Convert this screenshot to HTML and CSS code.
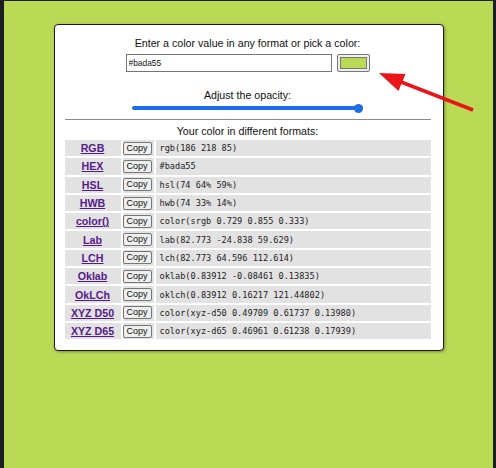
FILE: index.html
```html
<!DOCTYPE html>
<html lang="en">
<head>
<meta charset="utf-8">
<title>Color converter</title>
<link rel="stylesheet" href="styles.css">
</head>
<body>
<main class="card">
  <p class="label-line">Enter a color value in any format or pick a color:</p>
  <div class="input-row">
    <input class="color-text" type="text" value="#bada55">
    <button class="picker" type="button" aria-label="Pick a color"><span class="swatch"></span></button>
  </div>
  <p class="label-line opacity-label">Adjust the opacity:</p>
  <input class="opacity" type="range" min="0" max="100" value="100">
  <hr class="divider">
  <p class="label-line formats-label">Your color in different formats:</p>
  <table class="formats">
    <tbody>
      <tr><td class="name"><a href="#">RGB</a></td><td class="copy"><button type="button">Copy</button></td><td class="value">rgb(186 218 85)</td></tr>
      <tr><td class="name"><a href="#">HEX</a></td><td class="copy"><button type="button">Copy</button></td><td class="value">#bada55</td></tr>
      <tr><td class="name"><a href="#">HSL</a></td><td class="copy"><button type="button">Copy</button></td><td class="value">hsl(74 64% 59%)</td></tr>
      <tr><td class="name"><a href="#">HWB</a></td><td class="copy"><button type="button">Copy</button></td><td class="value">hwb(74 33% 14%)</td></tr>
      <tr><td class="name"><a href="#">color()</a></td><td class="copy"><button type="button">Copy</button></td><td class="value">color(srgb 0.729 0.855 0.333)</td></tr>
      <tr><td class="name"><a href="#">Lab</a></td><td class="copy"><button type="button">Copy</button></td><td class="value">lab(82.773 -24.838 59.629)</td></tr>
      <tr><td class="name"><a href="#">LCH</a></td><td class="copy"><button type="button">Copy</button></td><td class="value">lch(82.773 64.596 112.614)</td></tr>
      <tr><td class="name"><a href="#">Oklab</a></td><td class="copy"><button type="button">Copy</button></td><td class="value">oklab(0.83912 -0.08461 0.13835)</td></tr>
      <tr><td class="name"><a href="#">OkLCh</a></td><td class="copy"><button type="button">Copy</button></td><td class="value">oklch(0.83912 0.16217 121.44802)</td></tr>
      <tr><td class="name"><a href="#">XYZ D50</a></td><td class="copy"><button type="button">Copy</button></td><td class="value">color(xyz-d50 0.49709 0.61737 0.13980)</td></tr>
      <tr><td class="name"><a href="#">XYZ D65</a></td><td class="copy"><button type="button">Copy</button></td><td class="value">color(xyz-d65 0.46961 0.61238 0.17939)</td></tr>
    </tbody>
  </table>
</main>
<svg class="annotation" width="496" height="468" viewBox="0 0 496 468" aria-hidden="true">
  <line x1="469" y1="109" x2="392" y2="79" stroke="#e8161b" stroke-width="3.5"/>
  <polygon points="375,72 401.5,73 394.5,90" fill="#e8161b"/>
</svg>
</body>
</html>
```

FILE: styles.css
```css
html {
  background: #1d1e20;
  height: 100%;
}
body {
  margin: 1px 3px 0 4px;
  padding: 23px 0 0;
  min-height: 444px;
  background: #bada55;
  font-family: "Liberation Sans", Arial, sans-serif;
  font-size: 10.67px;
  color: #111;
  position: relative;
}
.card {
  box-sizing: border-box;
  width: 390px;
  margin: 0 auto;
  background: #fff;
  border: 1px solid #1a1a1a;
  border-radius: 4px;
  box-shadow: 1px 1px 3px rgba(0, 0, 0, 0.35);
  padding: 12px 12px 9px 10px;
}
.label-line {
  margin: 0;
  line-height: 12px;
  text-align: center;
}
.input-row {
  display: flex;
  justify-content: center;
  gap: 5px;
  margin-top: 5px;
  height: 18px;
}
.color-text {
  box-sizing: border-box;
  width: 206px;
  height: 18px;
  margin: 0;
  padding: 0 2px;
  border: 1px solid #767676;
  border-radius: 0;
  font-family: "Liberation Sans", Arial, sans-serif;
  font-size: 8.4px;
  color: #111;
}
.picker {
  box-sizing: border-box;
  width: 33px;
  height: 18px;
  margin: 0;
  padding: 2px;
  background: #efefef;
  border: 1px solid #767676;
  border-radius: 2px;
  display: flex;
}
.swatch {
  flex: 1;
  background: #bada55;
  border: 1px solid #777;
}
.opacity-label {
  margin-top: 17px;
}
.opacity {
  -webkit-appearance: none;
  appearance: none;
  display: block;
  width: 231px;
  height: 10px;
  margin: 2px auto 0;
  background: transparent;
}
.opacity::-webkit-slider-runnable-track {
  height: 4px;
  border-radius: 2px;
  background: #1a6fe6;
}
.opacity::-webkit-slider-thumb {
  -webkit-appearance: none;
  width: 9px;
  height: 9px;
  border-radius: 50%;
  background: #1a6fe6;
  margin-top: -2.5px;
  border: 0;
}
.divider {
  margin: 6px 0 0;
  border: 0;
  border-top: 1px solid #8a8a8a;
  height: 0;
}
.formats-label {
  margin-top: 5px;
}
.formats {
  width: calc(100% + 4px);
  margin: 1px -2px 0;
  border-collapse: separate;
  border-spacing: 2px;
}
.formats td {
  height: 16.3px;
  padding: 0;
  background: #e2e2e2;
  vertical-align: middle;
}
.name {
  width: 56px;
  text-align: center;
}
.name a {
  font-weight: bold;
  color: #551a8b;
  text-decoration: underline;
}
.copy {
  width: 31px;
}
.copy button {
  display: block;
  box-sizing: border-box;
  width: 29px;
  height: 13px;
  margin: 0;
  padding: 0;
  font-family: "Liberation Sans", Arial, sans-serif;
  font-size: 9px;
  line-height: 11px;
  color: #111;
  background: #efefef;
  border: 1px solid #767676;
  border-radius: 2px;
}
.value {
  padding-left: 4px !important;
  font-family: "DejaVu Sans Mono", monospace;
  font-size: 8.6px;
  color: #222;
  white-space: nowrap;
}
.annotation {
  position: absolute;
  left: 0;
  top: 0;
  pointer-events: none;
}
```
